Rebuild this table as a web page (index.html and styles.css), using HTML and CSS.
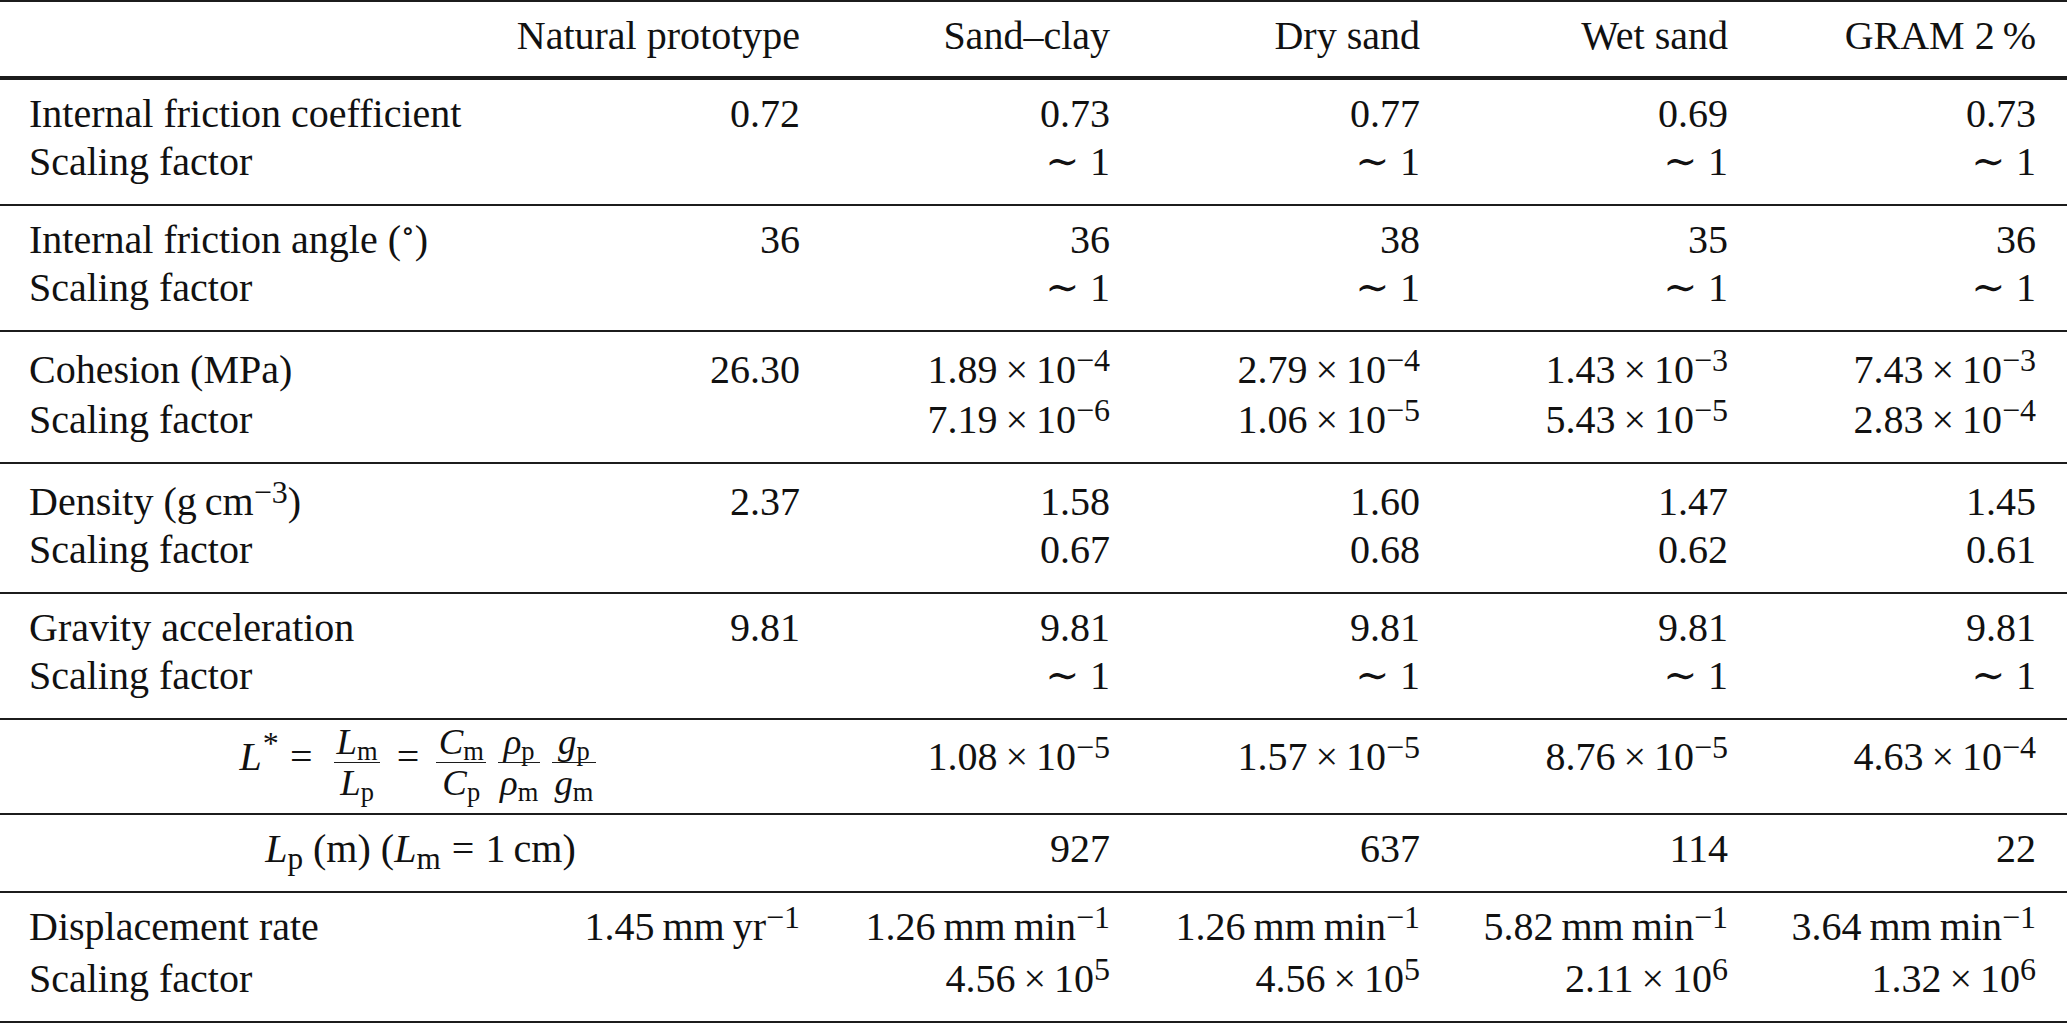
FILE: index.html
```html
<!DOCTYPE html>
<html lang="en">
<head>
<meta charset="utf-8">
<title>Scaling of model materials</title>
<link rel="stylesheet" href="styles.css">
</head>
<body>
<table class="tbl">
  <colgroup>
    <col class="w-label"><col class="w-nat"><col class="w-a"><col class="w-a"><col class="w-b"><col class="w-b">
  </colgroup>
  <thead>
    <tr class="head">
      <th class="lbl"></th>
      <th>Natural prototype</th>
      <th>Sand–clay</th>
      <th>Dry sand</th>
      <th>Wet sand</th>
      <th>GRAM 2&#8201;%</th>
    </tr>
  </thead>
  <tbody>
    <tr class="top">
      <td class="lbl">Internal friction coefficient</td>
      <td>0.72</td><td>0.73</td><td>0.77</td><td>0.69</td><td>0.73</td>
    </tr>
    <tr class="bot">
      <td class="lbl">Scaling factor</td>
      <td></td>
      <td><span class="sim">∼</span>1</td>
      <td><span class="sim">∼</span>1</td>
      <td><span class="sim">∼</span>1</td>
      <td><span class="sim">∼</span>1</td>
    </tr>

    <tr class="top">
      <td class="lbl">Internal friction angle (<span class="deg">∘</span>)</td>
      <td>36</td><td>36</td><td>38</td><td>35</td><td>36</td>
    </tr>
    <tr class="bot">
      <td class="lbl">Scaling factor</td>
      <td></td>
      <td><span class="sim">∼</span>1</td>
      <td><span class="sim">∼</span>1</td>
      <td><span class="sim">∼</span>1</td>
      <td><span class="sim">∼</span>1</td>
    </tr>

    <tr class="top lift4">
      <td class="lbl">Cohesion (MPa)</td>
      <td>26.30</td>
      <td>1.89<span class="op">×</span>10<span class="sup">−4</span></td>
      <td>2.79<span class="op">×</span>10<span class="sup">−4</span></td>
      <td>1.43<span class="op">×</span>10<span class="sup">−3</span></td>
      <td>7.43<span class="op">×</span>10<span class="sup">−3</span></td>
    </tr>
    <tr class="bot lift2">
      <td class="lbl">Scaling factor</td>
      <td></td>
      <td>7.19<span class="op">×</span>10<span class="sup">−6</span></td>
      <td>1.06<span class="op">×</span>10<span class="sup">−5</span></td>
      <td>5.43<span class="op">×</span>10<span class="sup">−5</span></td>
      <td>2.83<span class="op">×</span>10<span class="sup">−4</span></td>
    </tr>

    <tr class="top lift4">
      <td class="lbl">Density (g&#8201;cm<span class="sup">−3</span>)</td>
      <td>2.37</td><td>1.58</td><td>1.60</td><td>1.47</td><td>1.45</td>
    </tr>
    <tr class="bot">
      <td class="lbl">Scaling factor</td>
      <td></td><td>0.67</td><td>0.68</td><td>0.62</td><td>0.61</td>
    </tr>

    <tr class="top">
      <td class="lbl">Gravity acceleration</td>
      <td>9.81</td><td>9.81</td><td>9.81</td><td>9.81</td><td>9.81</td>
    </tr>
    <tr class="bot">
      <td class="lbl">Scaling factor</td>
      <td></td>
      <td><span class="sim">∼</span>1</td>
      <td><span class="sim">∼</span>1</td>
      <td><span class="sim">∼</span>1</td>
      <td><span class="sim">∼</span>1</td>
    </tr>

    <tr class="top bot formula">
      <td class="ctr" colspan="2"><span class="mi">L</span><span class="sup star">*</span><span class="rel">=</span><span class="gap"></span><span class="frac"><span class="num"><span class="mi">L</span><span class="sub">m</span></span><span class="den"><span class="mi">L</span><span class="sub">p</span></span></span><span class="rel">=</span><span class="frac"><span class="num"><span class="mi">C</span><span class="sub">m</span></span><span class="den"><span class="mi">C</span><span class="sub">p</span></span></span><span class="frac"><span class="num"><span class="mi">ρ</span><span class="sub">p</span></span><span class="den"><span class="mi">ρ</span><span class="sub">m</span></span></span><span class="frac"><span class="num"><span class="mi">g</span><span class="sub">p</span></span><span class="den"><span class="mi">g</span><span class="sub">m</span></span></span></td>
      <td>1.08<span class="op">×</span>10<span class="sup">−5</span></td>
      <td>1.57<span class="op">×</span>10<span class="sup">−5</span></td>
      <td>8.76<span class="op">×</span>10<span class="sup">−5</span></td>
      <td>4.63<span class="op">×</span>10<span class="sup">−4</span></td>
    </tr>

    <tr class="top bot">
      <td class="ctr" colspan="2"><span class="mi">L</span><span class="sub">p</span> (m) (<span class="mi">L</span><span class="sub">m</span><span class="rel">=</span>1&#8201;cm)</td>
      <td>927</td><td>637</td><td>114</td><td>22</td>
    </tr>

    <tr class="top">
      <td class="lbl">Displacement rate</td>
      <td>1.45&#8201;mm&#8201;yr<span class="sup">−1</span></td>
      <td>1.26&#8201;mm&#8201;min<span class="sup">−1</span></td>
      <td>1.26&#8201;mm&#8201;min<span class="sup">−1</span></td>
      <td>5.82&#8201;mm&#8201;min<span class="sup">−1</span></td>
      <td>3.64&#8201;mm&#8201;min<span class="sup">−1</span></td>
    </tr>
    <tr class="bot lift4 last">
      <td class="lbl">Scaling factor</td>
      <td></td>
      <td>4.56<span class="op">×</span>10<span class="sup">5</span></td>
      <td>4.56<span class="op">×</span>10<span class="sup">5</span></td>
      <td>2.11<span class="op">×</span>10<span class="sup">6</span></td>
      <td>1.32<span class="op">×</span>10<span class="sup">6</span></td>
    </tr>
  </tbody>
</table>
</body>
</html>
```

FILE: styles.css
```css
html, body {
  margin: 0;
  padding: 0;
  background: #ffffff;
}

.tbl {
  width: 2067px;
  table-layout: fixed;
  border-collapse: separate;
  border-spacing: 0;
  font-family: "Liberation Serif", "Times New Roman", "DejaVu Serif", serif;
  font-size: 40px;
  line-height: 48px;
  color: #111111;
}

.w-label { width: 486px; }
.w-nat { width: 345px; }
.w-a { width: 310px; }
.w-b { width: 308px; }

.tbl th,
.tbl td {
  font-weight: normal;
  text-align: right;
  white-space: nowrap;
  padding: 0 31px 0 29px;
  vertical-align: baseline;
}

.tbl .lbl { text-align: left; }
.tbl .ctr { text-align: center; padding-left: 10px; padding-right: 0; }

.head th {
  border-top: 2px solid #1c1c1c;
  border-bottom: 2px solid #1c1c1c;
  padding-top: 10px;
  padding-bottom: 16px;
}

.top td {
  border-top: 2px solid #1c1c1c;
  padding-top: 10px;
}
.bot td { padding-bottom: 18px; }

.top.lift4 td { padding-top: 14px; }
.lift4 td { padding-top: 4px; }
.lift2 td { padding-top: 2px; }

.last td { border-bottom: 2px solid #1c1c1c; }

.formula td { padding-top: 2px; padding-bottom: 11px; }

.mi { font-style: italic; }

.sup {
  font-size: 0.8em;
  vertical-align: 0.38em;
  line-height: 0;
}
.star { vertical-align: 0.5em; margin-left: 1px; }

.sub {
  font-size: 0.78em;
  vertical-align: -0.22em;
  line-height: 0;
}

.op { margin: 0 0.2em; }
.rel { margin: 0 0.28em; }
.gap { display: inline-block; width: 0.12em; }

.sim {
  font-family: "DejaVu Serif", serif;
  font-size: 1.02em;
  line-height: 0;
  margin-right: 0.26em;
}

.deg {
  font-size: 0.7em;
  vertical-align: 0.45em;
  line-height: 0;
  font-family: "DejaVu Serif", serif;
}

.frac {
  display: inline-flex;
  flex-direction: column;
  align-items: center;
  font-size: 0.92em;
  line-height: 1.08;
  vertical-align: 16px;
  margin: 0 0.16em;
}
.frac .num,
.frac .den {
  display: block;
  padding: 0 0.06em;
}
.frac .den {
  border-top: 1.5px solid #1c1c1c;
  align-self: stretch;
  text-align: center;
}
.frac .sub { font-size: 0.72em; }
```
